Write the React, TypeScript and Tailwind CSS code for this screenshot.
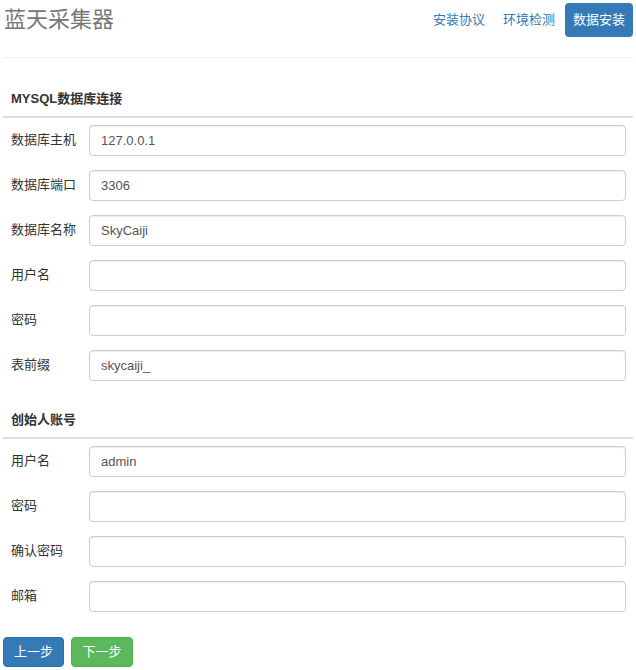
import React from "react";

const font = { fontFamily: '"Liberation Sans", "Noto Sans CJK SC", sans-serif' };

function Row({ label, value }: { label: string; value?: string }) {
  return (
    <div className="flex items-center h-[31px]">
      <div className="w-[86px] pl-[8px] pb-[3px] text-[13px] text-[#333] leading-none shrink-0">{label}</div>
      <div className="flex-1 h-[31px] border border-[#ccc] rounded-[4px] shadow-[inset_0_1px_1px_rgba(0,0,0,0.075)] flex items-center pl-[11px] text-[13px] text-[#555]">
        {value}
      </div>
    </div>
  );
}

function Heading({ text, pt }: { text: string; pt: string }) {
  return (
    <div className={`${pt} pb-[8px] border-b-2 border-[#ddd] pl-[8px]`}>
      <div className="h-[18px] leading-[18px] text-[13px] font-bold text-[#333]">{text}</div>
    </div>
  );
}

export default function App() {
  return (
    <div className="bg-white w-[636px] h-[670px] px-[3px] overflow-hidden" style={font}>
      <div className="h-[58px] border-b border-[#eee] flex items-start justify-between">
        <div className="pl-[1px] pt-[6px] text-[22px] leading-[28px] text-[#777]">蓝天采集器</div>
        <div className="flex items-start pt-[3px]">
          <div className="h-[34px] px-[8px] flex items-center text-[13px] text-[#337ab7]">安装协议</div>
          <div className="ml-[2px] h-[34px] px-[8px] flex items-center text-[13px] text-[#337ab7]">环境检测</div>
          <div className="ml-[2px] h-[34px] px-[8px] flex items-center text-[13px] text-white bg-[#337ab7] rounded-[4px]">数据安装</div>
        </div>
      </div>
      <Heading text="MYSQL数据库连接" pt="pt-[32px]" />
      <div className="pr-[7px] pt-[7px] flex flex-col gap-[14px]">
        <Row label="数据库主机" value="127.0.0.1" />
        <Row label="数据库端口" value="3306" />
        <Row label="数据库名称" value="SkyCaiji" />
        <Row label="用户名" />
        <Row label="密码" />
        <Row label="表前缀" value="skycaiji_" />
      </div>
      <Heading text="创始人账号" pt="pt-[30px]" />
      <div className="pr-[7px] pt-[7px] flex flex-col gap-[14px]">
        <Row label="用户名" value="admin" />
        <Row label="密码" />
        <Row label="确认密码" />
        <Row label="邮箱" />
      </div>
      <div className="flex gap-[7px] mt-[25px]">
        <div className="w-[61px] h-[30px] rounded-[4px] bg-[#337ab7] border border-[#2e6da4] text-white text-[13px] flex items-center justify-center">上一步</div>
        <div className="w-[62px] h-[30px] rounded-[4px] bg-[#5cb85c] border border-[#4cae4c] text-white text-[13px] flex items-center justify-center">下一步</div>
      </div>
    </div>
  );
}
